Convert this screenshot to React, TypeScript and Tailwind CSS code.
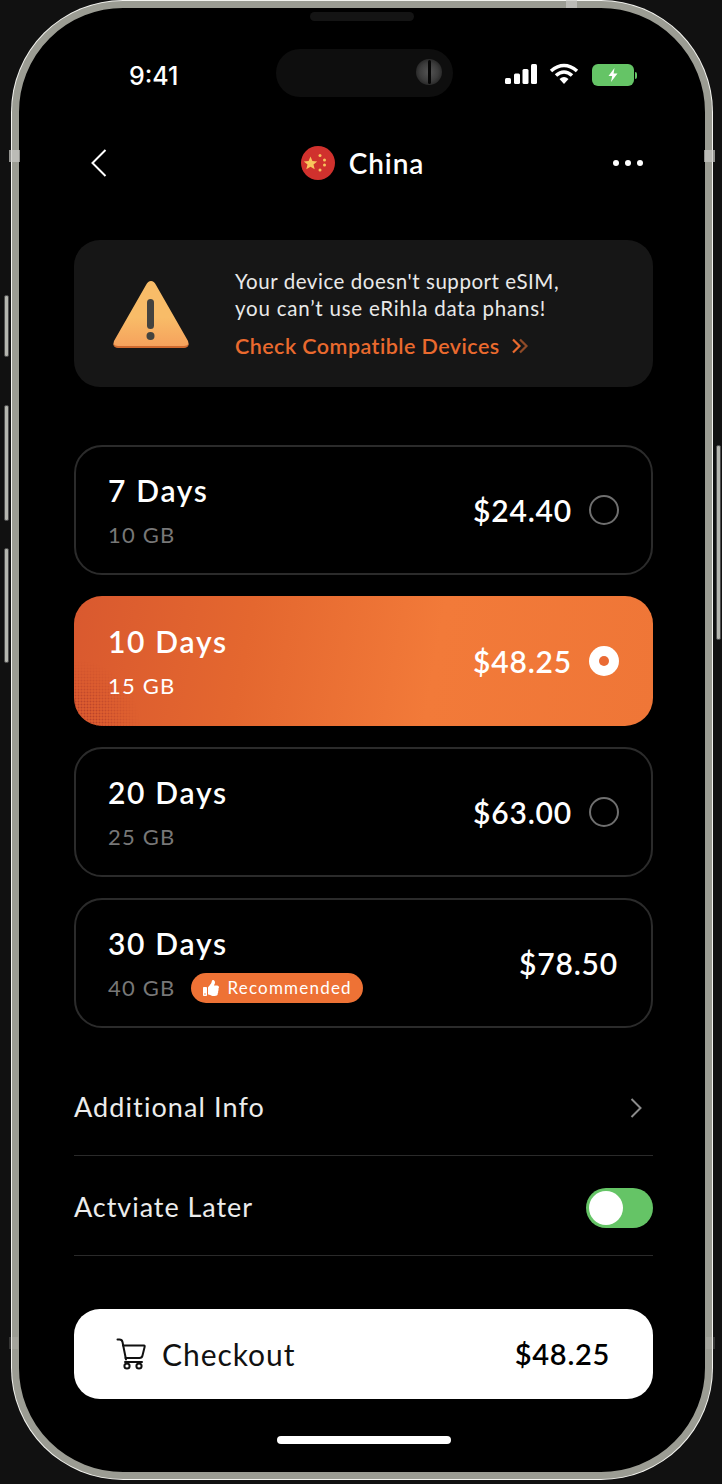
import React from "react";
import { FaThumbsUp } from "react-icons/fa";

const font = "font-['Lato','Liberation_Sans',sans-serif]";

function Radio({ on }: { on?: boolean }) {
  if (on)
    return (
      <span className="flex h-[30px] w-[30px] items-center justify-center rounded-full bg-white">
        <span className="h-[10px] w-[10px] rounded-full bg-[#ea6a33]" />
      </span>
    );
  return <span className="block h-[30px] w-[30px] rounded-full border-2 border-[#6f6f6f]" />;
}

function Plan({
  days,
  gb,
  price,
  radio,
  on,
  badge,
}: {
  days: string;
  gb: string;
  price: string;
  radio?: boolean;
  on?: boolean;
  badge?: boolean;
}) {
  return (
    <div
      className={
        on
          ? "relative flex h-[130px] items-center justify-between overflow-hidden rounded-[28px] bg-[linear-gradient(100deg,#d9592f_0%,#e4672f_30%,#f27a39_62%,#ef7637_100%)] pl-[34px] pr-[34px]"
          : "flex h-[130px] items-center justify-between rounded-[28px] border-2 border-[#2b2b2b] pl-[32px] pr-[32px]"
      }
    >
      {on && (
        <div className="absolute bottom-0 left-0 h-[80px] w-[70px] bg-[radial-gradient(#b8422a_0.8px,transparent_1.1px)] bg-[length:3px_3px] [mask-image:radial-gradient(circle_at_0%_100%,black_20%,transparent_62%)]" />
      )}
      <div className="relative flex flex-col pt-[2px]">
        <div className="h-[36px] text-[30px] font-semibold leading-[36px] tracking-[1.7px] text-white">{days}</div>
        <div className="mt-[12px] flex h-[30px] items-center">
          <span className={`text-[22px] leading-[30px] tracking-[1.2px] ${on ? "text-white" : "text-[#777777]"}`}>{gb}</span>
          {badge && (
            <span className="ml-[16px] flex h-[30px] w-[172px] items-center rounded-full bg-[#ee7235] pl-[12px] text-[17px] tracking-[1.2px] text-white">
              <FaThumbsUp className="mr-[8px] h-[16px] w-[16px]" />
              Recommended
            </span>
          )}
        </div>
      </div>
      <div className={`relative flex items-center ${badge ? "mr-[1px]" : ""}`}>
        <span className="text-[30px] font-semibold tracking-[0.8px] text-white">{price}</span>
        {radio && (
          <span className="ml-[17px]">
            <Radio on={on} />
          </span>
        )}
      </div>
    </div>
  );
}

function SideButton({ cls }: { cls: string }) {
  return <div className={`absolute w-[5px] rounded-[2px] border border-[#4d4d4d] bg-[#b5b6af] ${cls}`} />;
}

function Tick({ cls }: { cls: string }) {
  return <div className={`absolute bg-[#c9c9c4] ${cls}`} />;
}

export default function App() {
  return (
    <div className={`relative h-[1484px] w-[722px] overflow-hidden bg-[#111111] pl-[11px] ${font}`}>
      <SideButton cls="left-[4px] top-[295px] h-[62px]" />
      <SideButton cls="left-[4px] top-[405px] h-[116px]" />
      <SideButton cls="left-[4px] top-[548px] h-[115px]" />
      <SideButton cls="left-[716px] top-[445px] h-[195px]" />
      <div className="h-[1480px] w-[702px] rounded-[112px] bg-[#f4f4f0] p-[1px]">
        <div className="relative h-[1478px] w-[700px] rounded-[111px] border-[7px] border-[#9b9c93] bg-black pl-[55px] pr-[52px]">
          {/* Speaker */}
          <div className="absolute left-[291px] top-[4px] h-[9px] w-[104px] rounded-full bg-[#141414]" />
          {/* Status bar */}
          <div className="-ml-[55px] -mr-[52px] mt-[41px] flex h-[48px] items-center pl-[110px]">
            <span className="mt-[6px] w-[147px] font-['Inter',sans-serif] text-[25px] font-medium leading-none text-white">9:41</span>
            <div className="relative h-[48px] w-[177px] rounded-[24px] bg-[#0e0e0e]">
              <div className="absolute right-[11px] top-[10px] flex h-[26px] w-[26px] items-center justify-center rounded-full bg-[radial-gradient(circle,#555_0%,#3c3c3c_50%,#111_100%)]">
                <div className="h-[24px] w-[3px] rounded-full bg-[#050505]" />
              </div>
            </div>
            <svg width="32" height="22" viewBox="0 0 32 22" className="ml-[52px] mt-[4px]">
              <rect x="0" y="14" width="6" height="6" rx="1.5" fill="#fff" />
              <rect x="9" y="9.5" width="6" height="10.5" rx="1.5" fill="#fff" />
              <rect x="17.5" y="5" width="6" height="15" rx="1.5" fill="#fff" />
              <rect x="26" y="0" width="6" height="20" rx="1.5" fill="#fff" />
            </svg>
            <svg width="30" height="22" viewBox="0 0 30 22" className="ml-[12px] mt-[2px]">
              <path d="M2 8 Q15 -3 28 8" stroke="#fff" strokeWidth="3.6" fill="none" />
              <path d="M7 12.5 Q15 5.5 23 12.5" stroke="#fff" strokeWidth="3.6" fill="none" />
              <path d="M10.5 16 Q15 12 19.5 16 L15 21 Z" fill="#fff" />
            </svg>
            <div className="ml-[13px] mt-[4px] flex items-center">
              <div className="flex h-[22px] w-[42px] items-center justify-center rounded-[6px] bg-[#65c466]">
                <svg width="10" height="14" viewBox="0 0 10 14">
                  <path d="M6.5 0 L0.5 8 H4.2 L3 14 L9.5 5.6 H5.6 Z" fill="#fff" />
                </svg>
              </div>
              <div className="ml-[1px] h-[7px] w-[2px] rounded-r-[2px] bg-[#65c466]" />
            </div>
          </div>

          {/* Nav */}
          <div className="relative mt-[40px] flex h-[52px] items-center justify-center">
            <svg width="18" height="30" viewBox="0 0 18 30" className="absolute left-[16px] top-[11px]">
              <path d="M15.5 2 L2.5 15 L15.5 28" stroke="#fff" strokeWidth="2" fill="none" />
            </svg>
            <div className="-ml-[2px] flex items-center">
              <svg width="34" height="34" viewBox="0 0 34 34">
                <circle cx="17" cy="17" r="17" fill="#d0312d" />
                <path d="M9.5 10.5 L11.4 15 L16.2 15.4 L12.5 18.5 L13.7 23.2 L9.5 20.7 L5.3 23.2 L6.5 18.5 L2.8 15.4 L7.6 15 Z" fill="#f8c65c" />
                <circle cx="19" cy="9.5" r="1.5" fill="#f8c65c" />
                <circle cx="23.5" cy="14" r="1.5" fill="#f8c65c" />
                <circle cx="23.5" cy="19" r="1.5" fill="#f8c65c" />
                <circle cx="19" cy="24" r="1.5" fill="#f8c65c" />
              </svg>
              <span className="ml-[14px] text-[28px] font-semibold tracking-[0.9px] text-white">China</span>
            </div>
            <div className="absolute right-[10px] top-[23px] flex gap-[6px]">
              <span className="h-[6px] w-[6px] rounded-full bg-white" />
              <span className="h-[6px] w-[6px] rounded-full bg-white" />
              <span className="h-[6px] w-[6px] rounded-full bg-white" />
            </div>
          </div>

          {/* Warning */}
          <div className="mt-[51px] flex h-[147px] items-center rounded-[26px] bg-[#161616] pl-[38px]">
            <svg width="78" height="70" viewBox="0 0 78 70">
              <defs>
                <linearGradient id="tri" x1="0" y1="0" x2="0" y2="1">
                  <stop offset="0.55" stopColor="#f8bc68" />
                  <stop offset="1" stopColor="#f5a15c" />
                </linearGradient>
              </defs>
              <path d="M39 2 Q36 2 34 6 L2 62 Q0 68 5 68 H73 Q78 68 76 62 L44 6 Q42 2 39 2 Z" fill="url(#tri)" />
              <path d="M1.5 65 Q2 69 6 69 H72 Q76 69 76.5 65 Q75 67 72 67 H6 Q3 67 1.5 65 Z" fill="#cf6a2f" />
              <rect x="35" y="20" width="7" height="30" rx="3.5" fill="#44433f" />
              <circle cx="38.5" cy="57" r="4" fill="#44433f" />
            </svg>
            <div className="ml-[45px] flex flex-col">
              <div className="text-[20.5px] leading-[27px] tracking-[0.55px] text-[#e9e9e9]">
                Your device doesn't support eSIM,
                <br />
                <span className="tracking-[0.78px]">you can’t use eRihla data phans!</span>
              </div>
              <div className="mt-[11px] flex items-center text-[21.5px] font-semibold leading-[26px] tracking-[0.45px] text-[#ea6a2e]">
                Check Compatible Devices
                <svg width="18" height="16" viewBox="0 0 18 16" className="ml-[11px]">
                  <path d="M2 1.5 L8.5 8 L2 14.5" stroke="#ea6a2e" strokeWidth="2.2" fill="none" />
                  <path d="M9 1.5 L15.5 8 L9 14.5" stroke="#8f4a27" strokeWidth="2.2" fill="none" />
                </svg>
              </div>
            </div>
          </div>

          {/* Plans */}
          <div className="mt-[58px] flex flex-col gap-[21px]">
            <Plan days="7 Days" gb="10 GB" price="$24.40" radio />
            <Plan days="10 Days" gb="15 GB" price="$48.25" radio on />
            <Plan days="20 Days" gb="25 GB" price="$63.00" radio />
            <Plan days="30 Days" gb="40 GB" price="$78.50" badge />
          </div>

          {/* Settings */}
          <div className="mt-[28px] flex h-[100px] items-center justify-between border-b border-[#2a2a2a] pt-[4px]">
            <span className="text-[27px] tracking-[1.1px] text-[#ececec]">Additional Info</span>
            <svg width="14" height="22" viewBox="0 0 14 22" className="mr-[10px]">
              <path d="M2.5 2 L11.5 11 L2.5 20" stroke="#8b8b8b" strokeWidth="2" fill="none" />
            </svg>
          </div>
          <div className="flex h-[100px] items-center justify-between border-b border-[#2a2a2a] pt-[4px]">
            <span className="text-[27px] tracking-[0.95px] text-[#ececec]">Actviate Later</span>
            <div className="flex h-[40px] w-[67px] items-center rounded-full bg-[#65c466] pl-[3px]">
              <span className="h-[34px] w-[34px] rounded-full bg-white" />
            </div>
          </div>

          {/* Checkout */}
          <div className="mt-[53px] flex h-[90px] items-center justify-between rounded-[26px] bg-white pl-[42px] pr-[43px]">
            <div className="flex items-center">
              <svg width="30" height="32" viewBox="0 0 30 32" fill="none" stroke="#111" strokeWidth="2" strokeLinecap="round" strokeLinejoin="round">
                <path d="M1.5 1.5 H3.5 Q6 1.5 6.5 4 L10 21.5" />
                <path d="M7 7.5 H28 Q29 7.5 28.6 9 L26.5 17.5 Q26 20 23.5 20 H9.5" />
                <path d="M9 24 H26" />
                <circle cx="11" cy="28" r="2.6" />
                <circle cx="23" cy="28" r="2.6" />
              </svg>
              <span className="ml-[16px] text-[30px] tracking-[0.95px] text-[#111]">Checkout</span>
            </div>
            <span className="text-[29px] font-semibold tracking-[0.7px] text-black">$48.25</span>
          </div>

          {/* Home indicator */}
          <div className="ml-[203px] mt-[37px] h-[8px] w-[174px] rounded-full bg-white" />

          {/* Antenna bands */}
          <Tick cls="-left-[10px] top-[142px] h-[12px] w-[11px] opacity-70" />
          <Tick cls="-right-[10px] top-[142px] h-[12px] w-[11px] opacity-70" />
          <Tick cls="left-[547px] -top-[8px] h-[8px] w-[11px] opacity-70" />
          <Tick cls="-left-[10px] top-[1329px] h-[12px] w-[9px] opacity-20" />
          <Tick cls="-right-[10px] top-[1329px] h-[12px] w-[9px] opacity-20" />
        </div>
      </div>
    </div>
  );
}
